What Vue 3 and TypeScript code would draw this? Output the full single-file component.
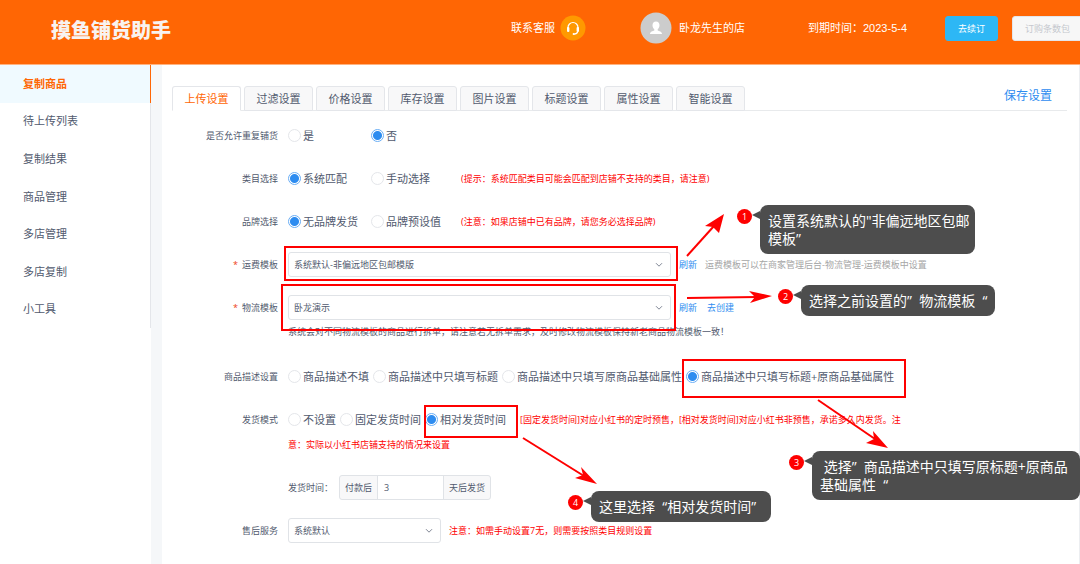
<script setup lang="ts">
import { ref } from 'vue'

interface Point {
  x: number
  y: number
}
interface Arrow {
  from: Point
  neck: Point
  head: string
}
interface Note {
  id: number
  cls: string
  lines: string[]
}

const menu = ['复制商品', '待上传列表', '复制结果', '商品管理', '多店管理', '多店复制', '小工具']
const activeMenu = ref('复制商品')

const tabs = ['上传设置', '过滤设置', '价格设置', '库存设置', '图片设置', '标题设置', '属性设置', '智能设置']
const activeTab = ref('上传设置')

const repeat = ref('否')
const category = ref('系统匹配')
const brand = ref('无品牌发货')
const freight = ref('系统默认-非偏远地区包邮模版')
const logistics = ref('卧龙演示')
const describe = ref('商品描述中只填写标题+原商品基础属性')
const shipMode = ref('相对发货时间')
const days = ref('3')
const service = ref('系统默认')

const describeOptions = [
  '商品描述不填',
  '商品描述中只填写标题',
  '商品描述中只填写原商品基础属性',
  '商品描述中只填写标题+原商品基础属性',
]
const shipOptions = ['不设置', '固定发货时间', '相对发货时间']

const arrows: Arrow[] = [
  { from: { x: 687, y: 256 }, neck: { x: 714, y: 226 }, head: '724,214 705,226 713,227 719,233' },
  { from: { x: 687, y: 298 }, neck: { x: 757, y: 297 }, head: '772,296 749,291 755,297 750,303' },
  { from: { x: 818, y: 400 }, neck: { x: 875, y: 439 }, head: '888,448 873,431 874,439 866,443' },
  { from: { x: 523, y: 438 }, neck: { x: 584, y: 476 }, head: '597,484 581,467 583,475 575,478' },
]

const notes: Note[] = [
  { id: 1, cls: 'note-1', lines: ['设置系统默认的"非偏远地区包邮', '模板”'] },
  { id: 2, cls: 'note-2', lines: ['选择之前设置的”\u00a0\u00a0物流模板\u00a0\u00a0“'] },
  { id: 3, cls: 'note-3', lines: ['\u00a0选择”\u00a0\u00a0商品描述中只填写原标题+原商品', '基础属性\u00a0\u00a0“'] },
  { id: 4, cls: 'note-4', lines: ['这里选择\u00a0\u00a0“相对发货时间”'] },
]
</script>

<template>
  <div class="page">
    <header class="header">
      <h1 class="logo">摸鱼铺货助手</h1>
      <div class="contact">
        <span>联系客服</span>
        <svg class="headset" viewBox="0 0 26 26" aria-hidden="true">
          <circle cx="13" cy="13" r="12.5" fill="#ff9900" />
          <path d="M8 14V12.500a5 5 0 0 1 10 0V14" fill="none" stroke="#fff" stroke-width="1.2" />
          <rect x="7" y="12" width="2.4" height="5" rx="1.1" fill="#fff" />
          <rect x="16.6" y="12" width="2.4" height="5" rx="1.1" fill="#fff" />
          <path d="M17.800 16.500q-.6 2.400-3.800 2.600" fill="none" stroke="#fff" stroke-width="1.1" />
          <circle cx="13.6" cy="19" r="1" fill="#fff" />
        </svg>
      </div>
      <div class="shop">
        <svg class="avatar" viewBox="0 0 32 32" aria-hidden="true">
          <circle cx="16" cy="16" r="15.5" fill="#cccccc" />
          <path
            d="M16 9.500c2.200 0 3.500 1.500 3.500 3.700 0 1.600-.7 3.200-1.800 4.100v1.300c1.600.8 4.100 1 4.300 3.400H10c.2-2.400 2.700-2.600 4.300-3.400v-1.300c-1.100-.9-1.800-2.500-1.800-4.100 0-2.200 1.300-3.700 3.500-3.700z"
            fill="#fff"
          />
        </svg>
        <span>卧龙先生的店</span>
      </div>
      <div class="expire">到期时间：<span class="date">2023-5-4</span></div>
      <button type="button" class="btn btn-renew">去续订</button>
      <button type="button" class="btn btn-pack">订购条数包</button>
    </header>

    <div class="body">
      <nav class="sidebar">
        <ul class="menu">
          <li v-for="m in menu" :key="m">
            <a href="#" :class="{ active: m === activeMenu }" @click.prevent="activeMenu = m">{{ m }}</a>
          </li>
        </ul>
      </nav>

      <main class="content">
        <div class="tabbar">
          <button
            v-for="t in tabs"
            :key="t"
            type="button"
            class="tab"
            :class="{ active: t === activeTab }"
            @click="activeTab = t"
          >
            {{ t }}
          </button>
          <a href="#" class="save" @click.prevent>保存设置</a>
        </div>

        <form class="form" @submit.prevent>
          <div class="item">
            <span class="label">是否允许重复铺货</span>
            <div class="control">
              <label v-for="o in ['是', '否']" :key="o" class="radio col">
                <input v-model="repeat" type="radio" name="repeat" :value="o" />{{ o }}
              </label>
            </div>
          </div>
          <div class="item">
            <span class="label">类目选择</span>
            <div class="control">
              <label v-for="o in ['系统匹配', '手动选择']" :key="o" class="radio col">
                <input v-model="category" type="radio" name="category" :value="o" />{{ o }}
              </label>
              <span class="tip col-tip">(提示：系统匹配类目可能会匹配到店铺不支持的类目，请注意)</span>
            </div>
          </div>
          <div class="item">
            <span class="label">品牌选择</span>
            <div class="control">
              <label v-for="o in ['无品牌发货', '品牌预设值']" :key="o" class="radio col">
                <input v-model="brand" type="radio" name="brand" :value="o" />{{ o }}
              </label>
              <span class="tip col-tip">(注意：如果店铺中已有品牌，请您务必选择品牌)</span>
            </div>
          </div>
          <div class="item">
            <label class="label required" for="freight">运费模板</label>
            <div class="control">
              <span class="select wide">
                <select id="freight" v-model="freight">
                  <option>系统默认-非偏远地区包邮模版</option>
                </select>
                <svg viewBox="0 0 8 6" aria-hidden="true"><path d="M1 1.200l3 3 3-3" /></svg>
              </span>
              <a href="#" class="link" @click.prevent>刷新</a>
              <span class="muted">运费模板可以在商家管理后台-物流管理-运费模板中设置</span>
            </div>
          </div>
          <div class="item">
            <label class="label required" for="logistics">物流模板</label>
            <div class="stack">
              <div class="control">
                <span class="select wide">
                  <select id="logistics" v-model="logistics">
                    <option>卧龙演示</option>
                  </select>
                  <svg viewBox="0 0 8 6" aria-hidden="true"><path d="M1 1.200l3 3 3-3" /></svg>
                </span>
                <a href="#" class="link" @click.prevent>刷新</a>
                <a href="#" class="link create" @click.prevent>去创建</a>
              </div>
              <p class="help">
                系统会对不同物流模板的商品进行拆单，请注意若无拆单需求，及时修改物流模板保持新老商品物流模板一致！
              </p>
            </div>
          </div>
          <div class="item">
            <span class="label">商品描述设置</span>
            <div class="control">
              <label v-for="o in describeOptions" :key="o" class="radio">
                <input v-model="describe" type="radio" name="describe" :value="o" />{{ o }}
              </label>
            </div>
          </div>
          <div class="item">
            <span class="label">发货模式</span>
            <div class="stack">
              <div class="control">
                <label v-for="o in shipOptions" :key="o" class="radio">
                  <input v-model="shipMode" type="radio" name="ship" :value="o" />{{ o }}
                </label>
                <span class="tip ship-tip">[固定发货时间]对应小红书的定时预售，[相对发货时间]对应小红书非预售，承诺多久内发货。注</span>
              </div>
              <p class="tip second">意：实际以小红书店铺支持的情况来设置</p>
            </div>
          </div>
          <div class="item">
            <span class="label"></span>
            <div class="control">
              <label class="days-label" for="days">发货时间：</label>
              <span class="group">
                <span class="addon">付款后</span>
                <input id="days" v-model="days" type="text" />
                <span class="addon">天后发货</span>
              </span>
            </div>
          </div>
          <div class="item">
            <label class="label" for="service">售后服务</label>
            <div class="control">
              <span class="select narrow">
                <select id="service" v-model="service">
                  <option>系统默认</option>
                </select>
                <svg viewBox="0 0 8 6" aria-hidden="true"><path d="M1 1.200l3 3 3-3" /></svg>
              </span>
              <span class="tip">注意：如需手动设置7无，则需要按照类目规则设置</span>
            </div>
          </div>
        </form>
      </main>
    </div>

    <svg class="marks" width="1080" height="564" viewBox="0 0 1080 564" aria-hidden="true">
      <g fill="none" stroke="#fe0000" stroke-width="2">
        <rect x="285" y="247" width="392" height="33" />
        <rect x="282" y="285" width="393" height="45" />
        <rect x="683" y="360" width="222" height="37" />
        <rect x="425" y="406" width="92" height="31" />
      </g>
      <g v-for="(a, i) in arrows" :key="i">
        <line :x1="a.from.x" :y1="a.from.y" :x2="a.neck.x" :y2="a.neck.y" stroke="#fe0000" stroke-width="2" />
        <polygon :points="a.head" fill="#fe0000" />
      </g>
    </svg>
    <div v-for="n in notes" :key="n.id" class="note" :class="n.cls">
      <span class="badge">{{ n.id }}</span>
      <span class="tail"></span>
      <div class="bubble">
        <div v-for="l in n.lines" :key="l">{{ l }}</div>
      </div>
    </div>
  </div>
</template>

<style>
body {
  margin: 0;
  background: #fff;
}
</style>

<style scoped>
.page {
  position: relative;
  display: flex;
  flex-direction: column;
  min-height: 100vh;
  overflow: hidden;
  font-family: 'Open Sans', 'Noto Sans CJK SC', sans-serif;
  font-size: 9px;
  color: #515a6e;
}
.page *,
.page *::before {
  box-sizing: border-box;
}
button,
input,
select {
  font-family: inherit;
  color: inherit;
}
a {
  text-decoration: none;
}
p {
  margin: 0;
}

.header {
  display: flex;
  align-items: center;
  height: 65px;
  padding: 0 0 8px 51px;
  overflow: hidden;
  background: #ff6604;
  border-bottom: 1px solid #ffb27f;
  color: #fff;
  font-size: 11px;
  line-height: 14px;
  white-space: nowrap;
}
.header > * {
  flex: none;
}
.logo {
  margin: 6px 0 0;
  font-size: 20px;
  line-height: 24px;
  font-weight: 900;
  color: #f8f3f0;
}
.contact,
.shop {
  display: flex;
  align-items: center;
}
.contact {
  gap: 5px;
  margin-left: 340px;
}
.headset {
  width: 26px;
  height: 26px;
}
.shop {
  gap: 7px;
  margin-left: 54px;
}
.avatar {
  width: 32px;
  height: 32px;
}
.expire {
  margin-left: 63px;
}
.date {
  font-family: 'Liberation Sans', sans-serif;
}
.btn {
  height: 25px;
  padding: 0 12px;
  border: 1px solid #2db7f5;
  border-radius: 3px;
  font-size: 9px;
}
.btn-renew {
  margin-left: 38px;
  background: #2db7f5;
  color: #fff;
}
.btn-pack {
  margin-left: 14px;
  background: #f7f7f7;
  border-color: #e4e6ea;
  color: #c5c8ce;
}

.body {
  display: flex;
  flex: 1;
}
.sidebar {
  flex: none;
  width: 151px;
  background: #fff;
}
.menu {
  display: flex;
  flex-direction: column;
  height: 263px;
  margin: 0;
  padding: 0;
  list-style: none;
  border-right: 1px solid #e4e6ea;
}
.menu li {
  display: flex;
  flex: 1;
}
.menu a {
  display: flex;
  flex: 1;
  align-items: center;
  padding: 0 0 2px 23px;
  font-size: 11px;
  color: #515a6e;
}
.menu a.active {
  margin-right: -1px;
  background: #f0faff;
  border-right: 1px solid #ff6604;
  color: #ff6604;
  font-weight: 700;
}
.content {
  flex: 1;
  min-width: 0;
  padding: 21px 12px 17px 10px;
  border-left: 11px solid #f5f7f9;
  border-right: 1px solid #eceef1;
  background: #fff;
}
.tabbar {
  display: flex;
  gap: 3px;
  height: 25px;
  border-bottom: 1px solid #e8eaec;
}
.tab {
  width: 69px;
  height: 25px;
  padding: 0;
  border: 1px solid #e4e6ea;
  border-radius: 3px 3px 0 0;
  background: #f8f8f9;
  font-size: 11px;
  line-height: 22px;
}
.tab.active {
  border-bottom-color: #fff;
  background: #fff;
  color: #ff6604;
}
.save {
  margin-left: auto;
  padding-right: 15px;
  font-size: 12px;
  line-height: 20px;
  color: #2d8cf0;
}

.form {
  margin-top: 12px;
}
.item {
  display: flex;
  gap: 10px;
  margin-bottom: 18px;
  white-space: nowrap;
}
.item:last-child {
  margin-bottom: 0;
}
.label {
  flex: none;
  width: 106px;
  line-height: 25px;
  text-align: right;
}
.required::before {
  content: '*';
  margin-right: 4px;
  color: #ed4014;
}
.control {
  display: flex;
  align-items: center;
  min-height: 25px;
}
.radio {
  display: flex;
  align-items: center;
  gap: 2px;
  margin-right: 4px;
  font-size: 11px;
  line-height: 25px;
}
.radio.col {
  width: 83px;
  margin-right: 0;
}
.radio input {
  flex: none;
  appearance: none;
  width: 13px;
  height: 13px;
  margin: 0;
  border: 1px solid #e4e6ea;
  border-radius: 50%;
  background: #fff;
}
.radio input:checked {
  border-color: #6aaef5;
  background: radial-gradient(circle, #2d8cf0 4px, #fff 5px);
}
.tip {
  color: #fe0000;
}
.col-tip {
  margin-left: 7px;
}
.ship-tip {
  margin-left: 10px;
}
.second {
  line-height: 25px;
}
.help {
  line-height: 24px;
  padding-bottom: 2px;
}
.select {
  position: relative;
  display: block;
  margin-right: 8px;
}
.wide {
  width: 383px;
}
.narrow {
  width: 153px;
}
.select select {
  display: block;
  appearance: none;
  width: 100%;
  height: 25px;
  padding: 0 20px 0 5px;
  border: 1px solid #e0e3e7;
  border-radius: 3px;
  background: #fff;
  font-size: 9px;
}
.select svg {
  position: absolute;
  top: 10px;
  right: 8px;
  width: 8px;
  height: 6px;
  fill: none;
  stroke: #808695;
  stroke-width: 1;
  pointer-events: none;
}
.link {
  margin-right: 8px;
  color: #2d8cf0;
}
.create {
  margin-left: 2px;
}
.muted {
  color: #a5a5a5;
}
.days-label {
  width: 51px;
}
.group {
  display: flex;
  height: 25px;
  border: 1px solid #e0e3e7;
  border-radius: 3px;
  background: #f8f8f9;
}
.addon {
  padding: 0 5px;
  line-height: 23px;
}
.group input {
  width: 67px;
  padding: 0 6px;
  border: solid #e0e3e7;
  border-width: 0 1px;
  background: #fff;
  font-size: 9px;
}

.marks {
  position: absolute;
  top: 0;
  left: 0;
  pointer-events: none;
}
.note {
  position: absolute;
  display: flex;
  align-items: flex-start;
  color: #fff;
}
.note-1 {
  left: 737px;
  top: 205px;
}
.note-2 {
  left: 778px;
  top: 285px;
}
.note-3 {
  left: 789px;
  top: 451px;
}
.note-4 {
  left: 568px;
  top: 491px;
}
.badge {
  width: 15px;
  height: 15px;
  margin-top: 4px;
  border-radius: 50%;
  background: #fe0000;
  font-size: 9px;
  line-height: 15px;
  text-align: center;
}
.tail {
  margin-top: 6px;
  border: solid transparent;
  border-width: 4px 8px 4px 0;
  border-right-color: #4d4d4d;
}
.bubble {
  padding: 7px 8px 6px;
  border-radius: 8px;
  background: #4d4d4d;
  font-size: 14px;
  line-height: 18px;
  white-space: nowrap;
}
.note-1 .bubble {
  padding-right: 5px;
}
.note-3 .bubble {
  padding-right: 12px;
}
.note-4 .bubble {
  padding-right: 15px;
}
</style>
